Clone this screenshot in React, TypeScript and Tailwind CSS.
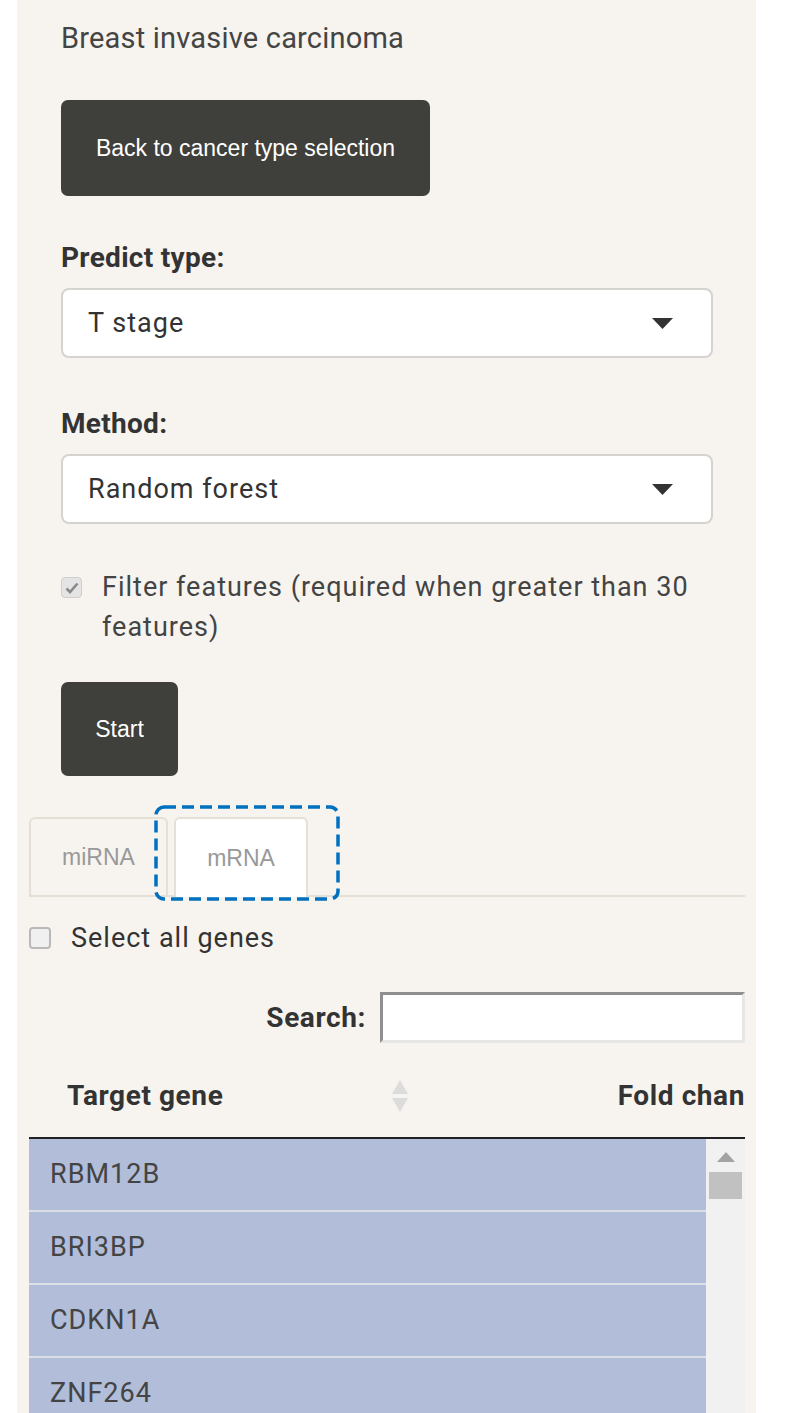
import React from 'react'

const rows = ['RBM12B', 'BRI3BP', 'CDKN1A', 'ZNF264']

function Caret() {
  return (
    <svg width="21" height="11" viewBox="0 0 21 11" className="shrink-0">
      <path d="M0 0 L21 0 L10.5 11 Z" fill="#333" />
    </svg>
  )
}

function SelectBox({ value }: { value: string }) {
  return (
    <div className="flex h-[70px] items-center justify-between rounded-[8px] border-2 border-[#d5d3cf] bg-white pl-[25px] pr-[38px]">
      <span className="text-[27px] tracking-[1px] text-[#333]">{value}</span>
      <Caret />
    </div>
  )
}

export default function App() {
  return (
    <div className="h-[1413px] w-[808px] overflow-hidden bg-white font-['Roboto',sans-serif]">
      <div className="ml-[17px] h-full w-[739px] bg-[#f7f4ef] pl-[12px] pr-[11px]">
        <div className="px-[32px] pt-[18px]">
          <div className="h-[40px] text-[29px] leading-[40px] tracking-[0.2px] text-[#444]">Breast invasive carcinoma</div>

          <button className="mt-[42px] h-[96px] w-[369px] rounded-[7px] bg-[#3f3f3b] font-['Liberation_Sans',sans-serif] text-[23px] text-white">
            Back to cancer type selection
          </button>

          <div className="mt-[45px] h-[34px] text-[28px] font-bold leading-[34px] tracking-[0.3px] text-[#333]">
            Predict type:
          </div>
          <div className="mt-[13px]">
            <SelectBox value="T stage" />
          </div>

          <div className="mt-[49px] h-[34px] text-[28px] font-bold leading-[34px] tracking-[0.3px] text-[#333]">
            Method:
          </div>
          <div className="mt-[13px]">
            <SelectBox value="Random forest" />
          </div>

          <div className="mt-[43px] flex items-start gap-[20px]">
            <span className="mt-[10px] flex h-[21px] w-[21px] shrink-0 items-center justify-center rounded-[4px] border border-[#cfcfcf] bg-[#e4e4e4]">
              <svg width="14" height="12" viewBox="0 0 14 12">
                <path d="M1.5 6.5 L5 10 L12.5 1.5" stroke="#8a8a8a" strokeWidth="2.6" fill="none" />
              </svg>
            </span>
            <span className="text-[27px] leading-[40px] tracking-[1px] text-[#444]">
              Filter features (required when greater than 30 features)
            </span>
          </div>

          <button className="mt-[35px] h-[94px] w-[117px] rounded-[7px] bg-[#3f3f3b] font-['Liberation_Sans',sans-serif] text-[23px] text-white">
            Start
          </button>
        </div>

        <div className="relative mt-[42px] flex h-[79px] items-end gap-[6px] border-b-2 border-[#e5e0d6]">
          <div className="flex h-[78px] w-[139px] items-center justify-center rounded-t-[6px] border-2 border-b-0 border-[#e5e0d6] font-['Liberation_Sans',sans-serif] text-[23px] text-[#999]">
            miRNA
          </div>
          <div className="-mb-[2px] flex h-[80px] w-[134px] items-center justify-center rounded-t-[6px] border-2 border-b-0 border-[#e5e0d6] bg-white font-['Liberation_Sans',sans-serif] text-[23px] text-[#999]">
            mRNA
          </div>
          <svg width="186" height="96" viewBox="0 0 186 96" className="pointer-events-none absolute left-[125px] top-[-13px]">
            <rect x="2" y="2" width="182" height="92" rx="8" fill="none" stroke="#0070c0" strokeWidth="3.5" strokeDasharray="12 6" />
          </svg>
        </div>

        <label className="mt-[21px] flex items-center gap-[20px]">
          <span className="h-[22px] w-[22px] rounded-[4px] border-2 border-[#b9b9b9] bg-[#f0f0f0]" />
          <span className="text-[27px] leading-[40px] tracking-[1px] text-[#333]">Select all genes</span>
        </label>

        <div className="mt-[34px] flex items-center justify-end gap-[14px]">
          <span className="text-[28px] font-bold tracking-[0.6px] text-[#333]">Search:</span>
          <div className="h-[51px] w-[365px] border-[3px] border-b-[#e6e6e6] border-l-[#8f8f8f] border-r-[#e6e6e6] border-t-[#8f8f8f] bg-white" />
        </div>

        <div className="relative mt-[12px] flex h-[84px] items-center border-b-2 border-[#222] pl-[38px]">
          <span className="text-[28px] font-bold tracking-[0.6px] text-[#333]">Target gene</span>
          <svg width="18" height="32" viewBox="0 0 18 32" className="absolute left-[362px] top-[25px]">
            <path d="M9 0 L17 14 L1 14 Z" fill="#dcdcdc" />
            <path d="M9 32 L17 18 L1 18 Z" fill="#dcdcdc" />
          </svg>
          <span className="ml-auto whitespace-nowrap text-[28px] font-bold tracking-[0.6px] text-[#333]">Fold chan</span>
        </div>

        <div className="flex">
          <div className="w-[678px]">
            {rows.map((r) => (
              <div
                key={r}
                className="flex h-[73px] items-center border-b-2 border-[#dcdfe6] bg-[#b1bdd9] pl-[21px] text-[27px] tracking-[1px] text-[#444]"
              >
                {r}
              </div>
            ))}
          </div>
          <div className="flex w-[39px] flex-col items-center bg-[#f1f1f1] pt-[13px]">
            <svg width="18" height="10" viewBox="0 0 18 10">
              <path d="M9 0 L18 10 L0 10 Z" fill="#a3a3a3" />
            </svg>
            <div className="mt-[10px] h-[27px] w-[33px] bg-[#c1c1c1]" />
          </div>
        </div>
      </div>
    </div>
  )
}
